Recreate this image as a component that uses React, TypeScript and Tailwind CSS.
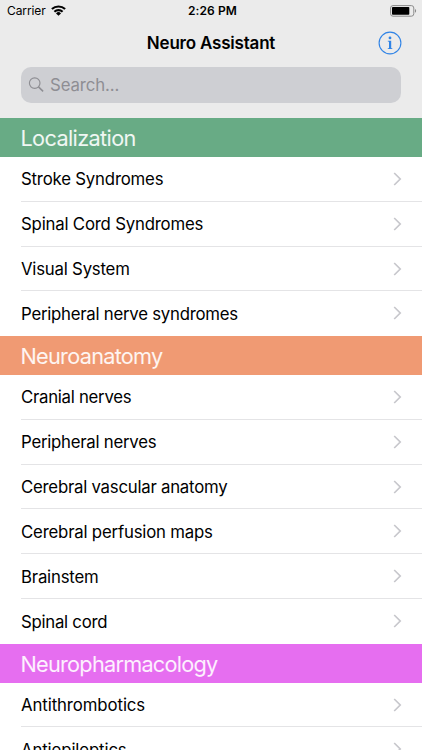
import React from 'react';

const sections = [
  {
    title: 'Localization',
    color: 'bg-[#68ab85]',
    tracking: 'tracking-[-0.64px]',
    items: [
      { label: 'Stroke Syndromes', tracking: 'tracking-[-0.2px]' },
      { label: 'Spinal Cord Syndromes', tracking: 'tracking-[-0.2px]' },
      { label: 'Visual System', tracking: 'tracking-[-0.22px]' },
      { label: 'Peripheral nerve syndromes', tracking: 'tracking-[-0.25px]' },
    ],
  },
  {
    title: 'Neuroanatomy',
    color: 'bg-[#f09a73]',
    tracking: 'tracking-[-0.73px]',
    items: [
      { label: 'Cranial nerves', tracking: 'tracking-[-0.28px]' },
      { label: 'Peripheral nerves', tracking: 'tracking-[-0.25px]' },
      { label: 'Cerebral vascular anatomy', tracking: 'tracking-[-0.24px]' },
      { label: 'Cerebral perfusion maps', tracking: 'tracking-[-0.2px]' },
      { label: 'Brainstem', tracking: 'tracking-[-0.2px]' },
      { label: 'Spinal cord', tracking: 'tracking-[-0.27px]' },
    ],
  },
  {
    title: 'Neuropharmacology',
    color: 'bg-[#e66ef0]',
    tracking: 'tracking-[-0.75px]',
    items: [
      { label: 'Antithrombotics', tracking: 'tracking-[-0.1px]' },
      { label: 'Antiepileptics', tracking: 'tracking-[-0.12px]' },
    ],
  },
];

const WifiIcon = () => (
  <svg width="15" height="11" viewBox="0 0 15 11" fill="none" stroke="black" strokeWidth="2.1">
    <path d="M0.9 4.1a9.5 9.5 0 0 1 13.2 0" />
    <path d="M3.4 6.8a5.9 5.9 0 0 1 8.2 0" />
    <path d="M7.5 10.8 5 8.4a3.5 3.5 0 0 1 5 0Z" fill="black" stroke="none" />
  </svg>
);

const BatteryIcon = () => (
  <svg width="27" height="12" viewBox="0 0 27 12" fill="none">
    <rect x="0.6" y="0.6" width="23.2" height="10.6" rx="2.4" stroke="#8b8b8b" strokeWidth="1" />
    <rect x="2" y="2" width="17.3" height="7.8" rx="0.8" fill="black" />
    <path d="M25 4.1c1.5.5 1.5 3.1 0 3.6Z" fill="#8b8b8b" />
  </svg>
);

const InfoIcon = () => (
  <svg width="24" height="24" viewBox="0 0 24 24" fill="none">
    <circle cx="12" cy="12" r="10.9" stroke="#2f83e6" strokeWidth="1.1" />
    <circle cx="12" cy="6.9" r="1.4" fill="#2f83e6" />
    <path d="M9.8 9.8h3.4v7.2l1.2.4v.7H9.7v-.7l1.3-.4v-6.2l-1.2-.3Z" fill="#2f83e6" />
  </svg>
);

const SearchIcon = () => (
  <svg width="16" height="16" viewBox="0 0 16 16" fill="none" stroke="#8e8e93" strokeWidth="1.15">
    <circle cx="6.7" cy="6.1" r="5.3" />
    <path d="m10.5 9.9 4.6 4.5" strokeWidth="1.5" />
  </svg>
);

const Chevron = () => (
  <svg width="9" height="14" viewBox="0 0 9 14" fill="none" stroke="#c7c7cc" strokeWidth="1.7">
    <path d="m1.2 1 6 6-6 6" />
  </svg>
);

const Row = ({ label, tracking, last }: { label: string; tracking: string; last: boolean }) => (
  <div className={`ml-[21px] flex h-[44.83px] items-center justify-between border-b pr-5 ${last ? 'border-transparent' : 'border-[#e4e4e6]'}`}>
    <span className={`whitespace-nowrap pt-[1px] text-[16.8px] leading-6 text-black ${tracking}`}>{label}</span>
    <Chevron />
  </div>
);

const App = () => (
  <div className="flex h-[750px] w-full flex-col overflow-hidden bg-white font-[Inter,sans-serif]">
    <header className="h-[118.3px] shrink-0 bg-[#ebebeb]">
      {/* Status bar */}
      <div className="grid h-[21px] grid-cols-3 items-center pl-[7px] pr-[5px] text-[12px]">
        <div className="flex items-center gap-[5px]">
          <span className="tracking-[-0.1px]">Carrier</span>
          <WifiIcon />
        </div>
        <span className="pl-px text-center font-semibold tracking-[0.1px]">2:26 PM</span>
        <div className="flex justify-end">
          <BatteryIcon />
        </div>
      </div>
      {/* Navigation */}
      <div className="mb-[2px] grid h-[43.5px] grid-cols-[1fr_auto_1fr] items-center px-5">
        <span />
        <h1 className="pt-[2px] text-[17px] font-semibold tracking-[-0.2px]">Neuro Assistant</h1>
        <button className="justify-self-end" aria-label="Info">
          <InfoIcon />
        </button>
      </div>
      <div className="mx-[21px] flex h-[36.5px] items-center gap-[6px] rounded-[10px] bg-[#cecfd3] pl-[7px] text-[16.8px] text-[#8e8e93]">
        <SearchIcon />
        <span className="pt-px tracking-[-0.1px]">Search...</span>
      </div>
    </header>

    {sections.map((section) => (
      <section key={section.title} className="shrink-0">
        <h2 className={`flex h-[38.7px] items-center pl-[20.5px] pt-[2px] text-[21.7px] text-white/90 ${section.color} ${section.tracking}`}>
          {section.title}
        </h2>
        {section.items.map((item, i) => (
          <Row key={item.label} {...item} last={i === section.items.length - 1} />
        ))}
      </section>
    ))}
  </div>
);

export default App;
